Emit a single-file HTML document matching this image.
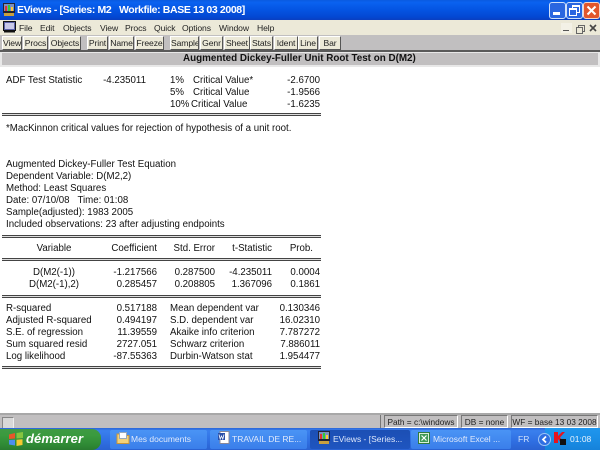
<!DOCTYPE html>
<html><head><meta charset="utf-8">
<style>
html,body{margin:0;padding:0;background:#fff}
#p{position:relative;width:600px;height:450px;overflow:hidden;background:#fff;font-family:"Liberation Sans",sans-serif;font-size:9.7px;color:#111}
#p div,#p span.a{position:absolute}
.t{position:absolute;white-space:pre;line-height:12px;height:12px;margin-top:2px}
.r{text-align:right;width:120px}
.c{text-align:center;width:120px}
.rule{position:absolute;left:2px;width:319px;height:3px;border-top:1px solid #444;border-bottom:1px solid #444;box-sizing:border-box;background:#ddd}
.b{position:absolute;top:36px;height:14px;box-sizing:border-box;background:#ece9d8;border:1px solid;border-color:#fff #555 #555 #fff;text-align:center;line-height:12px;font-size:8.6px;letter-spacing:-.1px;color:#222;overflow:hidden}
.m{position:absolute;top:21px;line-height:14px;font-size:8.6px;letter-spacing:-.1px;color:#222;white-space:pre}
.task{position:absolute;top:430px;height:19px;box-sizing:border-box;border-radius:2px;background:linear-gradient(#4a94f5,#3a7eea);color:#dfe9fb;font-size:8.5px;line-height:18px;white-space:pre;overflow:hidden}
.st{position:absolute;top:415px;height:13px;box-sizing:border-box;border:1px solid;border-color:#777 #fff #fff #777;line-height:12px;font-size:8.3px;text-align:center;white-space:pre;color:#222;overflow:hidden}
</style></head><body><div id="p">
<!-- title bar -->
<div style="left:0;top:0;width:600px;height:20px;background:linear-gradient(#0a5ae0 0,#0a62f0 12%,#0454e2 50%,#0347d2 85%,#0a3fc0 100%)"></div>
<svg style="position:absolute;left:2px;top:3px" width="14" height="14"><rect x="1" y="0" width="12" height="10" fill="#223"/><rect x="2" y="1" width="10" height="7" fill="#7a8fc0"/><rect x="3" y="3" width="2" height="5" fill="#d33"/><rect x="6" y="2" width="2" height="6" fill="#3c3"/><rect x="9" y="4" width="2" height="4" fill="#fc3"/><rect x="2" y="10" width="10" height="3" fill="#c8a040"/></svg>
<span class="t" style="left:17px;top:4px;margin-top:0;color:#fff;font-weight:bold;font-size:10.5px;line-height:13px;height:13px;letter-spacing:-.38px">EViews - [Series: M2   Workfile: BASE 13 03 2008]</span>
<div style="left:549px;top:2px;width:15px;height:15px;border-radius:3px;background:#2a66e0;border:1px solid #cfe0fa"></div>
<div style="left:553px;top:12px;width:7px;height:3px;background:#fff"></div>
<div style="left:566px;top:2px;width:15px;height:15px;border-radius:3px;background:#2a66e0;border:1px solid #cfe0fa"></div>
<div style="left:572px;top:5px;width:6px;height:5px;border:1px solid #fff;border-top-width:2px"></div>
<div style="left:569px;top:8px;width:6px;height:5px;border:1px solid #fff;border-top-width:2px;background:#2a66e0"></div>
<div style="left:583px;top:2px;width:15px;height:15px;border-radius:3px;background:#e2562c;border:1px solid #f3d6cc"></div>
<svg style="position:absolute;left:583px;top:2px" width="17" height="17"><path d="M4.5 4.5L12.5 12.5M12.5 4.5L4.5 12.5" stroke="#fff" stroke-width="2"/></svg>
<!-- menu bar -->
<div style="left:0;top:20px;width:600px;height:15px;background:#ece9d8"></div>
<svg style="position:absolute;left:3px;top:21px" width="13" height="12"><rect x=".5" y=".5" width="12" height="9" fill="#5a60a8" stroke="#111"/><rect x="2" y="2" width="9" height="6" fill="#c8c8e8"/><rect x="1" y="10" width="11" height="1.5" fill="#111"/></svg>
<span class="m" style="left:19px">File</span>
<span class="m" style="left:40px">Edit</span>
<span class="m" style="left:63px">Objects</span>
<span class="m" style="left:100px">View</span>
<span class="m" style="left:125px">Procs</span>
<span class="m" style="left:154px">Quick</span>
<span class="m" style="left:182px">Options</span>
<span class="m" style="left:219px">Window</span>
<span class="m" style="left:257px">Help</span>
<div style="left:561px;top:23px;width:11px;height:10px;background:#f3f1e6"></div>
<div style="left:563px;top:30px;width:6px;height:1px;background:#555"></div>
<div style="left:578px;top:25px;width:5px;height:5px;border:1px solid #666"></div>
<div style="left:576px;top:27px;width:5px;height:5px;border:1px solid #666;background:#ece9d8"></div>
<svg style="position:absolute;left:588px;top:23px" width="10" height="10"><path d="M2 2L8 8M8 2L2 8" stroke="#444" stroke-width="1.6"/></svg>
<!-- toolbar -->
<div style="left:0;top:35px;width:600px;height:15px;background:#c1bfc0"></div>
<span class="b" style="left:2px;width:20px">View</span>
<span class="b" style="left:23px;width:25px">Procs</span>
<span class="b" style="left:49px;width:32px">Objects</span>
<span class="b" style="left:87px;width:21px">Print</span>
<span class="b" style="left:109px;width:25px">Name</span>
<span class="b" style="left:135px;width:29px">Freeze</span>
<span class="b" style="left:170px;width:29px">Sample</span>
<span class="b" style="left:200px;width:23px">Genr</span>
<span class="b" style="left:224px;width:26px">Sheet</span>
<span class="b" style="left:250px;width:23px">Stats</span>
<span class="b" style="left:274px;width:24px">Ident</span>
<span class="b" style="left:298px;width:20px">Line</span>
<span class="b" style="left:319px;width:22px">Bar</span>
<!-- header -->
<div style="left:0;top:50px;width:600px;height:17px;background:#e8e8e8"></div>
<div style="left:0;top:50px;width:600px;height:2px;background:#5a5a5a"></div>
<div style="left:2px;top:53px;width:596px;height:12px;background:#c1bfc0"></div>
<span class="t" style="left:183px;top:53px;margin-top:0;font-weight:bold;font-size:9.85px">Augmented Dickey-Fuller Unit Root Test on D(M2)</span>
<!-- ADF block -->
<span class="t" style="left:6px;top:73px">ADF Test Statistic</span>
<span class="t r" style="left:26px;top:73px">-4.235011</span>
<span class="t" style="left:170px;top:73px">1%</span><span class="t" style="left:193px;top:73px">Critical Value*</span><span class="t r" style="left:200px;top:73px">-2.6700</span>
<span class="t" style="left:170px;top:85px">5%</span><span class="t" style="left:193px;top:85px">Critical Value</span><span class="t r" style="left:200px;top:85px">-1.9566</span>
<span class="t" style="left:170px;top:97px">10%</span><span class="t" style="left:191px;top:97px">Critical Value</span><span class="t r" style="left:200px;top:97px">-1.6235</span>
<span class="rule" style="top:113px"></span>
<span class="t" style="left:6px;top:121px">*MacKinnon critical values for rejection of hypothesis of a unit root.</span>
<span class="t" style="left:6px;top:157px">Augmented Dickey-Fuller Test Equation</span>
<span class="t" style="left:6px;top:169px">Dependent Variable: D(M2,2)</span>
<span class="t" style="left:6px;top:181px">Method: Least Squares</span>
<span class="t" style="left:6px;top:193px">Date: 07/10/08   Time: 01:08</span>
<span class="t" style="left:6px;top:205px">Sample(adjusted): 1983 2005</span>
<span class="t" style="left:6px;top:217px">Included observations: 23 after adjusting endpoints</span>
<span class="rule" style="top:235px"></span>
<!-- table head -->
<span class="t c" style="left:-6px;top:241px">Variable</span>
<span class="t r" style="left:37px;top:241px">Coefficient</span>
<span class="t r" style="left:95px;top:241px">Std. Error</span>
<span class="t r" style="left:152px;top:241px">t-Statistic</span>
<span class="t r" style="left:193px;top:241px">Prob.</span>
<span class="rule" style="top:258px"></span>
<span class="t c" style="left:-6px;top:265px">D(M2(-1))</span>
<span class="t r" style="left:37px;top:265px">-1.217566</span>
<span class="t r" style="left:95px;top:265px">0.287500</span>
<span class="t r" style="left:152px;top:265px">-4.235011</span>
<span class="t r" style="left:200px;top:265px">0.0004</span>
<span class="t c" style="left:-6px;top:277px">D(M2(-1),2)</span>
<span class="t r" style="left:37px;top:277px">0.285457</span>
<span class="t r" style="left:95px;top:277px">0.208805</span>
<span class="t r" style="left:152px;top:277px">1.367096</span>
<span class="t r" style="left:200px;top:277px">0.1861</span>
<span class="rule" style="top:295px"></span>
<span class="t" style="left:6px;top:301px">R-squared</span><span class="t r" style="left:37px;top:301px">0.517188</span><span class="t" style="left:170px;top:301px">Mean dependent var</span><span class="t r" style="left:200px;top:301px">0.130346</span>
<span class="t" style="left:6px;top:313px">Adjusted R-squared</span><span class="t r" style="left:37px;top:313px">0.494197</span><span class="t" style="left:170px;top:313px">S.D. dependent var</span><span class="t r" style="left:200px;top:313px">16.02310</span>
<span class="t" style="left:6px;top:325px">S.E. of regression</span><span class="t r" style="left:37px;top:325px">11.39559</span><span class="t" style="left:170px;top:325px">Akaike info criterion</span><span class="t r" style="left:200px;top:325px">7.787272</span>
<span class="t" style="left:6px;top:337px">Sum squared resid</span><span class="t r" style="left:37px;top:337px">2727.051</span><span class="t" style="left:170px;top:337px">Schwarz criterion</span><span class="t r" style="left:200px;top:337px">7.886011</span>
<span class="t" style="left:6px;top:349px">Log likelihood</span><span class="t r" style="left:37px;top:349px">-87.55363</span><span class="t" style="left:170px;top:349px">Durbin-Watson stat</span><span class="t r" style="left:200px;top:349px">1.954477</span>
<span class="rule" style="top:366px"></span>
<!-- status bar -->
<div style="left:0;top:413px;width:600px;height:2px;background:#a8a8a8"></div>
<div style="left:0;top:415px;width:600px;height:14px;background:#c1bfc0"></div>
<div style="left:2px;top:417px;width:10px;height:10px;background:#d8d8d8;border:1px solid #eee;border-top-color:#888;border-left-color:#888"></div>
<div style="left:380px;top:415px;width:1px;height:13px;background:#777"></div>
<span class="st" style="left:384px;width:74px">Path = c:\windows</span>
<span class="st" style="left:461px;width:47px">DB = none</span>
<span class="st" style="left:511px;width:87px">WF = base 13 03 2008</span>
<!-- taskbar -->
<div style="left:0;top:428px;width:600px;height:22px;background:linear-gradient(#2b66d8 0,#3a80ee 12%,#2f6fe2 60%,#2a62d2 100%)"></div>
<div style="left:0;top:429px;width:101px;height:21px;border-radius:0 9px 9px 0;background:linear-gradient(#3f9a44 0,#3a9a3e 30%,#2f8a35 75%,#2a7a30 100%)"></div>
<svg style="position:absolute;left:8px;top:431px" width="16" height="16"><path d="M1 3.5L7 2V7.5L1 8Z" fill="#e8562a"/><path d="M8.5 2L15 1V7L8.5 7.5Z" fill="#86c440"/><path d="M1 9L7 8.8V14.5L1 13.5Z" fill="#4d8ef0"/><path d="M8.5 8.8L14.5 8.3V14L8.5 15Z" fill="#f5c92f"/></svg>
<span class="t" style="left:26px;top:431px;margin-top:0;color:#fff;font-weight:bold;font-style:italic;font-size:13px;line-height:16px;height:16px;letter-spacing:.1px">démarrer</span>
<span class="task" style="left:110px;width:97px;padding-left:21px">Mes documents</span>
<svg style="position:absolute;left:116px;top:431px" width="14" height="14"><path d="M1 3H5L6 4.5H13V12.5H1Z" fill="#f3d27a" stroke="#c8963a"/><rect x="3.5" y="1.5" width="7" height="6" fill="#fff" stroke="#9ab"/></svg>
<span class="task" style="left:210px;width:97px;padding-left:22px">TRAVAIL DE RE...</span>
<svg style="position:absolute;left:217px;top:431px" width="13" height="14"><rect x="3" y=".5" width="9" height="12" fill="#fff" stroke="#889"/><rect x="1" y="2" width="7" height="7" fill="#2a4fa8"/><path d="M2 3.5L3.2 8L4.5 5L5.8 8L7 3.5" stroke="#fff" fill="none" stroke-width=".8"/></svg>
<span class="task" style="left:310px;width:100px;padding-left:23px;background:linear-gradient(#1c4fb4,#1f55c0)">EViews - [Series...</span>
<svg style="position:absolute;left:317px;top:431px" width="14" height="14"><rect x="1" y="0" width="12" height="10" fill="#223"/><rect x="2" y="1" width="10" height="7" fill="#7a8fc0"/><rect x="3" y="3" width="2" height="5" fill="#d33"/><rect x="6" y="2" width="2" height="6" fill="#3c3"/><rect x="9" y="4" width="2" height="4" fill="#fc3"/><rect x="2" y="10" width="10" height="3" fill="#c8a040"/></svg>
<span class="task" style="left:411px;width:100px;padding-left:22px">Microsoft Excel ...</span>
<svg style="position:absolute;left:418px;top:431px" width="13" height="14"><rect x=".5" y="1.5" width="11" height="11" fill="#d8efd8" stroke="#2f7a3f"/><rect x="2" y="3" width="8" height="8" fill="#3f9a55"/><path d="M3.5 4.5L8.5 9.5M8.5 4.5L3.5 9.5" stroke="#fff" stroke-width="1.2"/></svg>
<span class="t" style="left:518px;top:433px;margin-top:0;color:#cfe0fa;font-size:8.5px">FR</span>
<div style="left:545px;top:428px;width:55px;height:22px;background:linear-gradient(#1f96ee,#1a8ee6 50%,#1682da)"></div>
<div style="left:538px;top:433px;width:13px;height:13px;border-radius:50%;background:#2f6fe2;border:1px solid #9cc4f6;box-sizing:border-box"></div>
<svg style="position:absolute;left:538px;top:433px" width="13" height="13"><path d="M8 3.5L5 6.5L8 9.5" stroke="#fff" stroke-width="1.8" fill="none"/></svg>
<svg style="position:absolute;left:553px;top:431px" width="14" height="15"><path d="M1 1H5V5L9 1H12L7 6.5L12 12H8L5 8V12H1Z" fill="#e5141e"/><rect x="7" y="8" width="6" height="6" fill="#111"/></svg>
<span class="t" style="left:570px;top:433px;margin-top:0;color:#e8f2fd;font-size:8.5px">01:08</span>
</div></body></html>
